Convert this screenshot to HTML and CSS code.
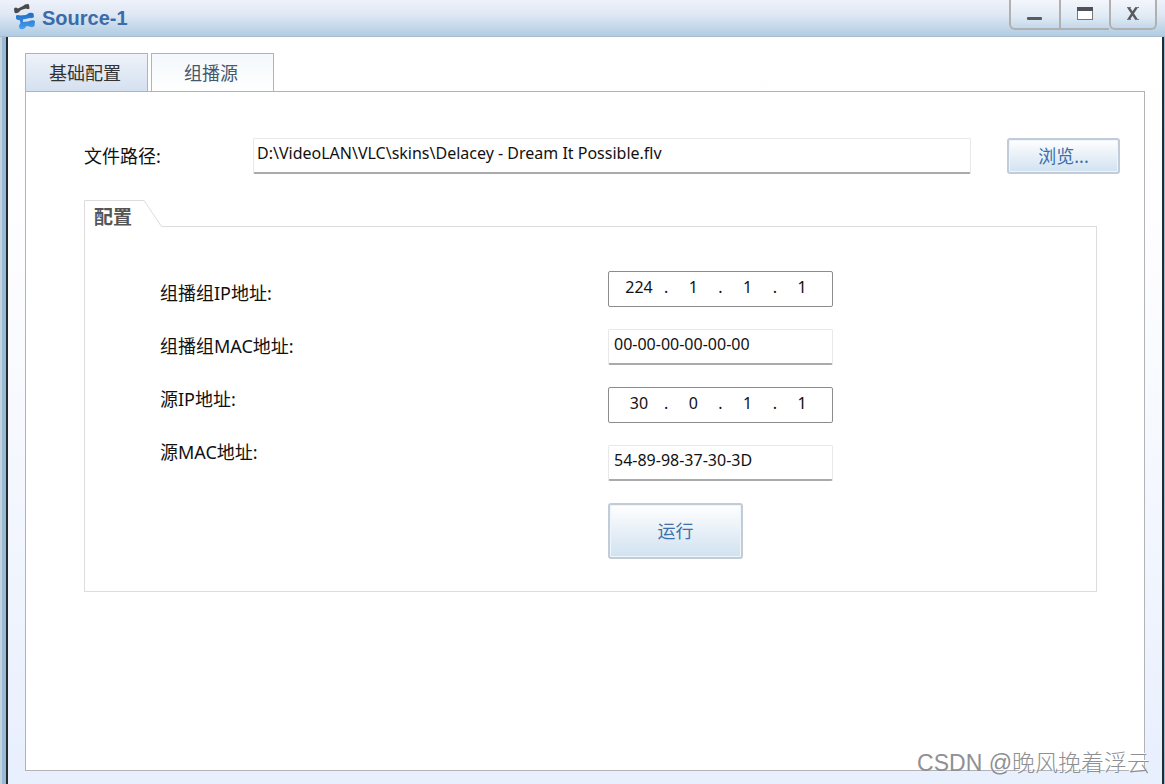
FILE: index.html
```html
<!doctype html>
<html lang="zh-CN">
<head>
<meta charset="utf-8">
<title>Source-1</title>
<link rel="stylesheet" href="styles.css">
</head>
<body>
<div class="window">
	<div class="titlebar">
		<svg class="logo" width="24" height="28" viewBox="0 0 24 28">
			<defs>
				<linearGradient id="blue" x1="0" y1="0" x2="0" y2="1">
					<stop offset="0" stop-color="#1f6cc4"/>
					<stop offset="1" stop-color="#459ff0"/>
				</linearGradient>
			</defs>
			<path fill="#4a4a4a" d="M2 6q0-1.500 2-1.500l2 1 5-2.500 2-1.500q3-1 4 0l0.500 4q-1.500 1-3.500 0l-5 1.500-2.500 2.500q-3 1.500-4 0z"/>
			<path fill="url(#blue)" d="M4 12.500q2-1 4 0l6-0.500 3-2q3-0.500 4.500 0.500l0.500 3.500q-1 1.500-4 1l-7 1.500v2.500l5-0.500 3-1q2.500-0.500 4 0.500l-0.500 5q-2 2-5 0.500l-3-0.500-2 2.500q-3 1.500-5 0l-0.500-3 1.500-2.500-1-3q-3.500 0-3.500-2z"/>
		</svg>
		<h1 class="title">Source-1</h1>
		<div class="winbtns">
			<button type="button" class="winbtn" aria-label="最小化"><svg width="18" height="18" viewBox="0 0 18 18"><rect x="1" y="12" width="15" height="3" rx="1" fill="#5a5a62"/></svg></button>
			<button type="button" class="winbtn" aria-label="最大化"><svg width="18" height="18" viewBox="0 0 18 18"><rect x="1.500" y="2.500" width="15" height="12" fill="#fff" stroke="#777"/><rect x="1" y="2" width="16" height="4" fill="#505058"/></svg></button>
			<button type="button" class="winbtn close" aria-label="关闭"><svg width="18" height="18" viewBox="0 0 18 18"><path d="M4.500 2.500l8 12M12.500 2.500l-8 12" stroke="#5a5a60" stroke-width="2.400"/><path d="M3 2.500h4M11 2.500h4M3 14.500h4M11 14.500h4" stroke="#777" stroke-width="1"/></svg></button>
		</div>
	</div>
	<div class="client">
		<div class="tabs">
			<button type="button" class="tab active">基础配置</button>
			<button type="button" class="tab">组播源</button>
		</div>
		<form class="page">
			<div class="filerow">
				<label class="label" for="path">文件路径:</label>
				<input type="text" class="text" id="path" value="D:\VideoLAN\VLC\skins\Delacey - Dream It Possible.flv">
				<button type="button" class="btn browse">浏览...</button>
			</div>
			<div class="group">
				<div class="grouptab">
					<svg class="groupshape" width="79" height="28" viewBox="0 0 79 28">
						<path d="M0 28V0H60L78 26V28z" fill="#fff"/>
						<path d="M0.500 28V0.500H60L77.500 26.500H79" fill="none" stroke="#dcdcdc"/>
					</svg>
					<h2 class="grouptitle">配置</h2>
				</div>
				<div class="groupbox">
					<div class="labels">
						<label class="label" for="gip">组播组IP地址:</label>
						<label class="label" for="gmac">组播组MAC地址:</label>
						<label class="label" for="sip">源IP地址:</label>
						<label class="label" for="smac">源MAC地址:</label>
					</div>
					<div class="fields">
						<div class="ip">
							<input type="text" id="gip" value="224">.<input type="text" aria-label="组播组IP 2" value="1">.<input type="text" aria-label="组播组IP 3" value="1">.<input type="text" aria-label="组播组IP 4" value="1">
						</div>
						<input type="text" class="text" id="gmac" value="00-00-00-00-00-00">
						<div class="ip">
							<input type="text" id="sip" value="30">.<input type="text" aria-label="源IP 2" value="0">.<input type="text" aria-label="源IP 3" value="1">.<input type="text" aria-label="源IP 4" value="1">
						</div>
						<input type="text" class="text" id="smac" value="54-89-98-37-30-3D">
						<button type="button" class="btn run">运行</button>
					</div>
				</div>
			</div>
		</form>
	</div>
	<div class="watermark">CSDN @晚风挽着浮云</div>
</div>
</body>
</html>
```
FILE: styles.css
```css
*{
	box-sizing:border-box;
}
body{
	margin:0;
	font-family:"Noto Sans","Noto Sans CJK SC",sans-serif;
	font-size:16px;
	color:#111;
}
button,input{
	font-family:inherit;
	font-size:inherit;
	color:inherit;
}
.window{
	position:relative;
	display:flex;
	flex-direction:column;
	min-height:100vh;
	padding:0 1px 0 6px;
	background:linear-gradient(to right,#c5d3de 0,#c5d3de 2px,#98bad4 2px);
}
.titlebar{
	display:flex;
	align-items:flex-start;
	height:37px;
	margin:0 -1px 0 -6px;
	padding:0 8px 0 12px;
	background:linear-gradient(#eef2fb,#dfe8f3 40%,#b0cce3);
	border-bottom:1px solid #a9bccb;
}
.logo{
	margin-top:3px;
}
.title{
	flex:1;
	margin:0 0 0 6px;
	font-family:"Liberation Sans",Arial,sans-serif;
	font-size:20px;
	line-height:36px;
	color:#3a6cab;
}
.winbtns{
	display:flex;
}
.winbtn{
	display:flex;
	align-items:center;
	justify-content:center;
	width:50px;
	height:30px;
	padding:0;
	background:linear-gradient(#f3f6fb,#dfeaf5 60%,#c3d8ea);
	border:2px solid #b0b0b0;
	border-top:0;
	border-right:0;
}
.winbtn:first-child{
	border-bottom-left-radius:6px;
}
.winbtn.close{
	width:48px;
	border-right:2px solid #b0b0b0;
	border-radius:0 0 6px 6px;
}
.client{
	flex:1;
	display:flex;
	flex-direction:column;
	padding:16px 17px 13px;
	border:solid #222b30;
	border-width:0 2px;
	background:linear-gradient(#fff,#fdfdff 30%,#e8effd);
}
.tabs{
	display:flex;
	gap:3px;
}
.tab{
	width:123px;
	height:39px;
	padding:0 3px 2px 0;
	margin-bottom:-1px;
	font-size:18px;
	color:#46586c;
	background:linear-gradient(#f3f8fc,#fff);
	border:1px solid #b0b4b6;
}
.tab.active{
	color:#333;
	background:linear-gradient(#eef2f9,#d5e0f0);
}
.page{
	flex:1;
	padding:46px 24px 20px 58px;
	background:#fff;
	border:1px solid #b0b4b6;
}
.label{
	font-size:18px;
	line-height:24px;
}
.filerow{
	display:flex;
	align-items:center;
}
.filerow .label{
	width:169px;
}
.text{
	height:36px;
	padding:0 5px 6px;
	border:1px solid #e8e8e8;
	border-bottom:2px solid #aaa;
	border-radius:2px;
	background:#fff;
}
.filerow .text{
	flex:1;
	padding-left:3px;
}
.btn{
	padding:0 0 3px;
	font-size:18px;
	color:#3b70a9;
	background:linear-gradient(#fff,#eaf1f8 45%,#d0e2f1);
	border:2px solid #c2cbd8;
	border-radius:3px;
	box-shadow:inset 0 0 0 1px #f0f5fa;
}
.browse{
	width:113px;
	height:36px;
	margin-left:36px;
}
.group{
	margin:26px 23px 0 0;
}
.grouptab{
	position:relative;
	height:26px;
}
.groupshape{
	position:absolute;
	left:0;
	top:0;
}
.grouptitle{
	position:relative;
	margin:0;
	padding-left:10px;
	font-size:19px;
	line-height:34px;
	color:#555;
}
.groupbox{
	display:flex;
	padding:44px 20px 32px 75px;
	border:1px solid #dcdcdc;
}
.labels{
	display:flex;
	flex-direction:column;
	gap:29px;
	width:448px;
	padding-top:10px;
}
.fields{
	display:flex;
	flex-direction:column;
	gap:22px;
	width:225px;
}
.ip{
	display:flex;
	align-items:center;
	justify-content:space-between;
	height:36px;
	padding:0 12px 5px 12px;
	border:1px solid #8c8c8c;
	border-radius:2px;
}
.ip input{
	width:36px;
	padding:0;
	text-align:center;
	background:none;
	border:0;
}
.run{
	width:135px;
	height:56px;
}
.watermark{
	position:absolute;
	right:15px;
	bottom:5px;
	font-family:"Liberation Sans","Noto Sans CJK SC",sans-serif;
	font-size:23px;
	font-weight:300;
	line-height:32px;
	color:#8e9094;
	text-shadow:-1px -1px 0 #fff;
}
```
